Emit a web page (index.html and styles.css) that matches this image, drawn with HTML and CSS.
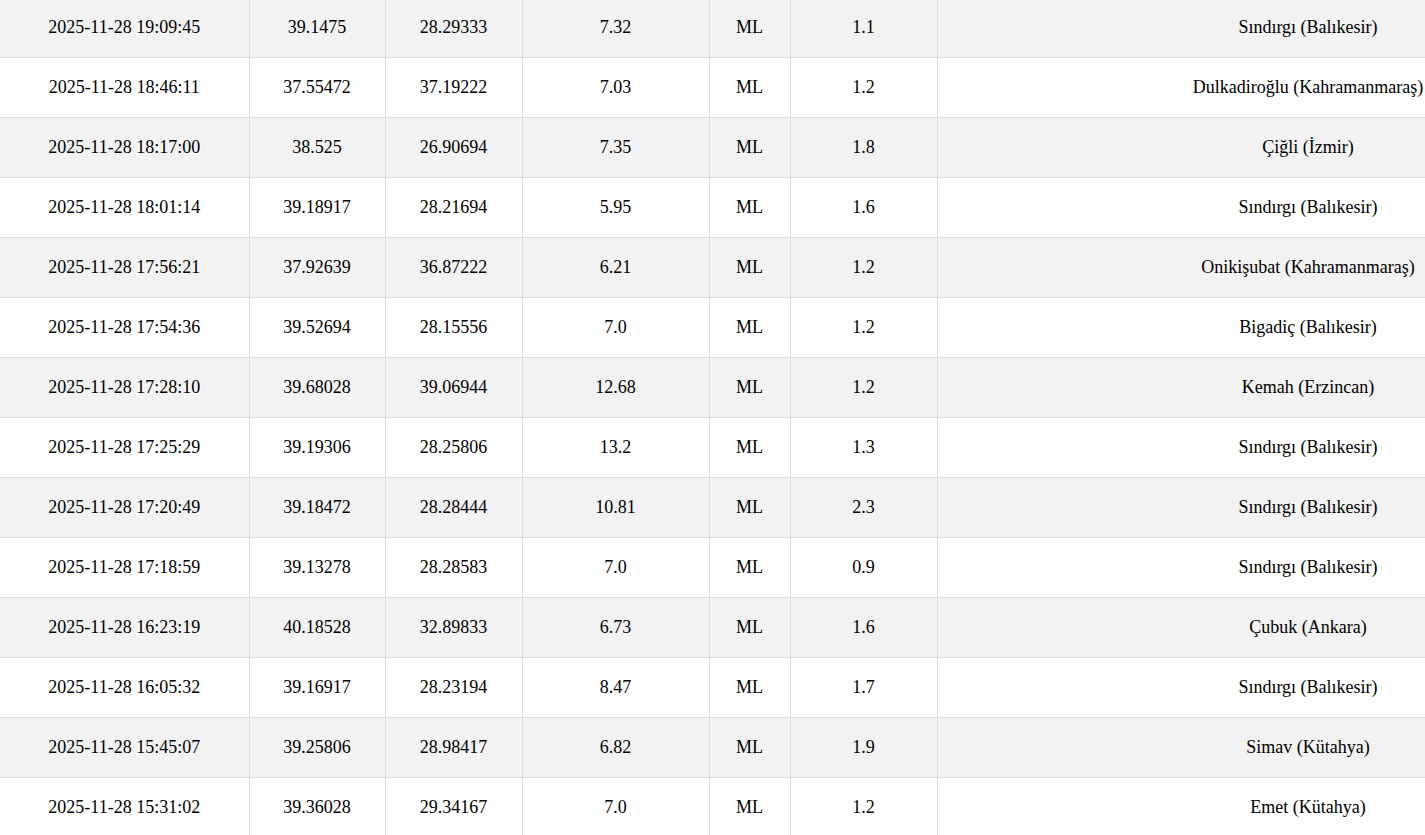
FILE: index.html
```html
<!DOCTYPE html>
<html lang="tr">
<head>
<meta charset="utf-8">
<title>Son Depremler</title>
<link rel="stylesheet" href="styles.css">
</head>
<body>
<div class="viewport">
<table class="quakes">
<colgroup>
<col class="c-date"><col class="c-lat"><col class="c-lon"><col class="c-depth"><col class="c-type"><col class="c-mag"><col class="c-place">
</colgroup>
<tbody>
<tr><td>2025-11-28 19:09:45</td><td>39.1475</td><td>28.29333</td><td>7.32</td><td>ML</td><td>1.1</td><td>Sındırgı (Balıkesir)</td></tr>
<tr><td>2025-11-28 18:46:11</td><td>37.55472</td><td>37.19222</td><td>7.03</td><td>ML</td><td>1.2</td><td>Dulkadiroğlu (Kahramanmaraş)</td></tr>
<tr><td>2025-11-28 18:17:00</td><td>38.525</td><td>26.90694</td><td>7.35</td><td>ML</td><td>1.8</td><td>Çiğli (İzmir)</td></tr>
<tr><td>2025-11-28 18:01:14</td><td>39.18917</td><td>28.21694</td><td>5.95</td><td>ML</td><td>1.6</td><td>Sındırgı (Balıkesir)</td></tr>
<tr><td>2025-11-28 17:56:21</td><td>37.92639</td><td>36.87222</td><td>6.21</td><td>ML</td><td>1.2</td><td>Onikişubat (Kahramanmaraş)</td></tr>
<tr><td>2025-11-28 17:54:36</td><td>39.52694</td><td>28.15556</td><td>7.0</td><td>ML</td><td>1.2</td><td>Bigadiç (Balıkesir)</td></tr>
<tr><td>2025-11-28 17:28:10</td><td>39.68028</td><td>39.06944</td><td>12.68</td><td>ML</td><td>1.2</td><td>Kemah (Erzincan)</td></tr>
<tr><td>2025-11-28 17:25:29</td><td>39.19306</td><td>28.25806</td><td>13.2</td><td>ML</td><td>1.3</td><td>Sındırgı (Balıkesir)</td></tr>
<tr><td>2025-11-28 17:20:49</td><td>39.18472</td><td>28.28444</td><td>10.81</td><td>ML</td><td>2.3</td><td>Sındırgı (Balıkesir)</td></tr>
<tr><td>2025-11-28 17:18:59</td><td>39.13278</td><td>28.28583</td><td>7.0</td><td>ML</td><td>0.9</td><td>Sındırgı (Balıkesir)</td></tr>
<tr><td>2025-11-28 16:23:19</td><td>40.18528</td><td>32.89833</td><td>6.73</td><td>ML</td><td>1.6</td><td>Çubuk (Ankara)</td></tr>
<tr><td>2025-11-28 16:05:32</td><td>39.16917</td><td>28.23194</td><td>8.47</td><td>ML</td><td>1.7</td><td>Sındırgı (Balıkesir)</td></tr>
<tr><td>2025-11-28 15:45:07</td><td>39.25806</td><td>28.98417</td><td>6.82</td><td>ML</td><td>1.9</td><td>Simav (Kütahya)</td></tr>
<tr><td>2025-11-28 15:31:02</td><td>39.36028</td><td>29.34167</td><td>7.0</td><td>ML</td><td>1.2</td><td>Emet (Kütahya)</td></tr>
</tbody>
</table>
</div>
</body>
</html>
```
FILE: styles.css
```css
html, body {
  margin: 0;
  padding: 0;
  background: #ffffff;
}

.viewport {
  width: 1425px;
  height: 835px;
  overflow: hidden;
}

.quakes {
  margin-top: -2px;
  width: 1679px;
  table-layout: fixed;
  border-collapse: collapse;
  font-family: "Liberation Serif", "Times New Roman", serif;
  font-size: 18px;
  color: #000;
}

.c-date { width: 249px; }
.c-lat { width: 136px; }
.c-lon { width: 137px; }
.c-depth { width: 187px; }
.c-type { width: 81px; }
.c-mag { width: 147px; }
.c-place { width: 742px; }

.quakes td {
  height: 59px;
  padding: 0;
  font-family: "Liberation Serif", "Times New Roman", serif;
  font-size: 18px;
  text-align: center;
  vertical-align: middle;
  white-space: nowrap;
  border-right: 1px solid #dddddd;
  border-bottom: 1px solid #dddddd;
}

.quakes tr:nth-child(odd) td {
  background: #f2f2f2;
}
```
